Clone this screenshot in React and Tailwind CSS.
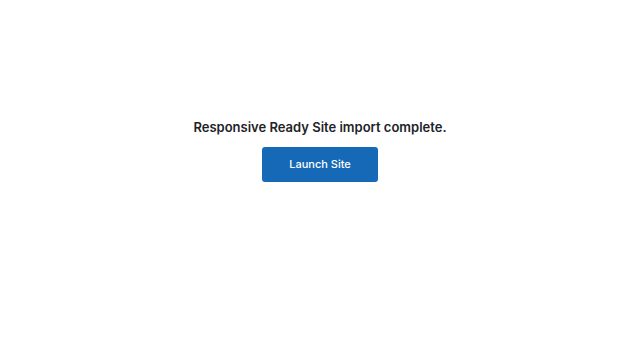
export default function App() {
    return (
        <div className="w-[640px] h-[360px] bg-white flex flex-col items-center pt-[118px]" style={{fontFamily: "Inter, 'Liberation Sans', sans-serif"}}>
            <h2 className="text-[13px] leading-[18px] font-semibold text-[#1d2327]">Responsive Ready Site import complete.</h2>
            <button className="mt-[11px] w-[116px] h-[35px] rounded-[3px] bg-[#1669b6] text-white text-[11px] font-medium flex items-center justify-center">
                Launch Site
            </button>
        </div>
    );
}
